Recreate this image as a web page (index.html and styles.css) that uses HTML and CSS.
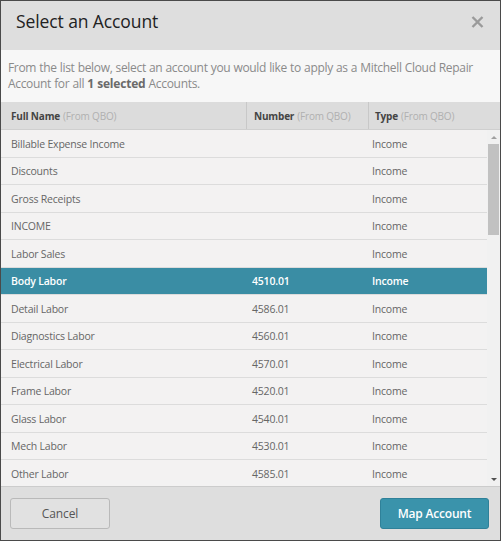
FILE: index.html
```html
<!DOCTYPE html>
<html>
<head>
<meta charset="utf-8">
<link rel="stylesheet" href="styles.css">
</head>
<body>
<div class="dialog">
  <div class="header">
    <div class="title">Select an Account</div>
    <svg class="close" width="13" height="12" viewBox="0 0 13 12"><path d="M1.5 1 L11.5 11 M11.5 1 L1.5 11" stroke="#9a9a9a" stroke-width="2.4" fill="none"/></svg>
  </div>
  <div class="desc">
    <span class="line">From the list below, select an account you would like to apply as a Mitchell Cloud Repair</span>
    <span class="line">Account for all <b class="count">1 selected</b> Accounts.</span>
  </div>
  <div class="thead">
    <div class="th th-name"><b>Full Name</b> <span class="src">(From QBO)</span></div>
    <div class="th th-num"><b>Number</b> <span class="src">(From QBO)</span></div>
    <div class="th th-type"><b>Type</b> <span class="src">(From QBO)</span></div>
  </div>
  <div class="list">
    <div class="rows">
      <div class="row"><div class="c-name">Billable Expense Income</div><div class="c-num"></div><div class="c-type">Income</div></div>
      <div class="row"><div class="c-name">Discounts</div><div class="c-num"></div><div class="c-type">Income</div></div>
      <div class="row"><div class="c-name">Gross Receipts</div><div class="c-num"></div><div class="c-type">Income</div></div>
      <div class="row"><div class="c-name">INCOME</div><div class="c-num"></div><div class="c-type">Income</div></div>
      <div class="row"><div class="c-name">Labor Sales</div><div class="c-num"></div><div class="c-type">Income</div></div>
      <div class="row selected"><div class="c-name">Body Labor</div><div class="c-num">4510.01</div><div class="c-type">Income</div></div>
      <div class="row"><div class="c-name">Detail Labor</div><div class="c-num">4586.01</div><div class="c-type">Income</div></div>
      <div class="row"><div class="c-name">Diagnostics Labor</div><div class="c-num">4560.01</div><div class="c-type">Income</div></div>
      <div class="row"><div class="c-name">Electrical Labor</div><div class="c-num">4570.01</div><div class="c-type">Income</div></div>
      <div class="row"><div class="c-name">Frame Labor</div><div class="c-num">4520.01</div><div class="c-type">Income</div></div>
      <div class="row"><div class="c-name">Glass Labor</div><div class="c-num">4540.01</div><div class="c-type">Income</div></div>
      <div class="row"><div class="c-name">Mech Labor</div><div class="c-num">4530.01</div><div class="c-type">Income</div></div>
      <div class="row"><div class="c-name">Other Labor</div><div class="c-num">4585.01</div><div class="c-type">Income</div></div>
    </div>
    <div class="scrollbar">
      <div class="arrow up"></div>
      <div class="track"><div class="thumb"></div></div>
      <div class="arrow down"></div>
    </div>
  </div>
  <div class="footer">
    <button class="btn btn-cancel">Cancel</button>
    <button class="btn btn-primary">Map Account</button>
  </div>
</div>
</body>
</html>
```
FILE: styles.css
```css
html, body {
  margin: 0;
  padding: 0;
  background: #ffffff;
}
body {
  font-family: "Open Sans", "Liberation Sans", sans-serif;
}
.dialog {
  width: 501px;
  height: 541px;
  box-sizing: border-box;
  border: 1px solid #4a4a4a;
  display: flex;
  flex-direction: column;
  background: #f3f2f2;
}
.header {
  height: 49px;
  flex: none;
  box-sizing: border-box;
  background: #dedede;
  display: flex;
  align-items: flex-start;
  justify-content: space-between;
  padding: 8px 16px 0 15px;
}
.title {
  font-size: 17.5px;
  letter-spacing: -0.1px;
  line-height: 24px;
  color: #222;
}
.close {
  margin-top: 7px;
}
.desc {
  height: 52px;
  flex: none;
  box-sizing: border-box;
  background: #f7f7f7;
  padding: 10px 0 0 7px;
  font-size: 12px;
  letter-spacing: -0.32px;
  word-spacing: 0.3px;
  line-height: 16px;
  color: #8a8a8a;
}
.line {
  display: block;
  white-space: nowrap;
}
.desc .count {
  color: #6a6a6a;
  letter-spacing: -0.2px;
}
.thead {
  height: 27px;
  flex: none;
  background: #dcdcdc;
  border-bottom: 1px solid #cfcfcf;
  display: grid;
  grid-template-columns: 245px 122px 1fr;
  font-size: 10px;
  letter-spacing: -0.18px;
  color: #444;
}
.th {
  display: flex;
  align-items: center;
  gap: 3px;
  white-space: nowrap;
  padding-top: 1px;
}
.th-name { padding-left: 10px; }
.th-num { padding-left: 7px; border-left: 1px solid #c8c8c8; }
.th-type { padding-left: 6px; border-left: 1px solid #c8c8c8; }
.src { color: #b0b0b0; }
.list {
  height: 356px;
  flex: none;
  display: flex;
  overflow: hidden;
}
.rows {
  flex: 1;
  display: flex;
  flex-direction: column;
}
.row {
  flex: none;
  box-sizing: border-box;
  height: 27.5px;
  padding-top: 1px;
  border-bottom: 1px solid #dcdcdc;
  display: grid;
  grid-template-columns: 245px 122px 1fr;
  align-items: center;
  font-size: 10.5px;
  letter-spacing: -0.2px;
  color: #666;
}
.row.selected {
  background: #3a8da4;
  color: #fff;
  font-weight: 600;
}
.c-name { padding-left: 10px; }
.c-num { padding-left: 6px; }
.c-type { padding-left: 4px; }
.scrollbar {
  width: 13px;
  flex: none;
  display: flex;
  flex-direction: column;
  background: #f1f1f1;
}
.arrow {
  height: 14px;
  flex: none;
  display: flex;
  align-items: center;
  justify-content: center;
}
.arrow.up::before {
  content: "";
  border-left: 3px solid transparent;
  border-right: 3px solid transparent;
  border-bottom: 3px solid #a0a0a0;
}
.arrow.down::before {
  content: "";
  border-left: 3px solid transparent;
  border-right: 3px solid transparent;
  border-top: 3px solid #505050;
}
.track {
  flex: 1;
  padding: 0 1px;
}
.thumb {
  height: 91px;
  background: #c1c1c1;
}
.footer {
  flex: 1;
  background: #dedede;
  border-top: 1px solid #cccccc;
  display: flex;
  align-items: center;
  justify-content: space-between;
  padding: 0 11px 0 9px;
}
.btn {
  font-family: "Open Sans", "Liberation Sans", sans-serif;
  font-size: 12px;
  height: 31px;
  border-radius: 3px;
  cursor: pointer;
}
.btn-cancel {
  width: 100px;
  background: #e1e1e1;
  border: 1px solid #b9b9b9;
  color: #555;
  letter-spacing: -0.1px;
}
.btn-primary {
  width: 109px;
  background: #3a93ab;
  border: 1px solid #2f8199;
  color: #fff;
  font-weight: 600;
  letter-spacing: -0.2px;
}
```
